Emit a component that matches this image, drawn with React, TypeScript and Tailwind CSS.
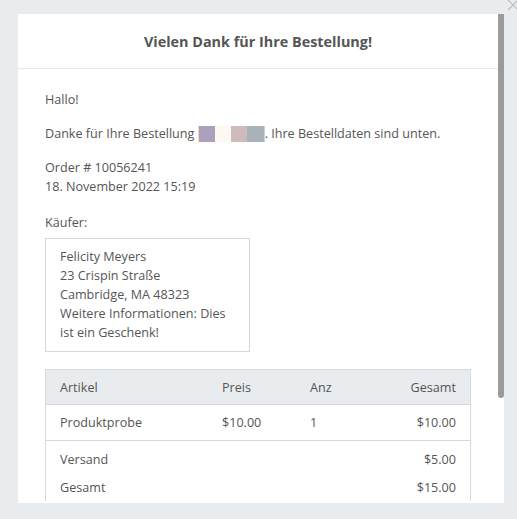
import React from "react";

const font = { fontFamily: '"Open Sans", "Noto Sans", Arial, sans-serif' };

function Blurred() {
  // pixelated redaction blocks
  return (
    <span className="inline-flex align-[-4px]">
      <span className="inline-block h-4 w-[1px] bg-[#f1d8bb]" />
      <span className="inline-block h-4 w-[16px] bg-[#ada0bd]" />
      <span className="inline-block h-4 w-[16px] bg-[#fdf8f3]" />
      <span className="inline-block h-4 w-[16px] bg-[#cdbcbb]" />
      <span className="inline-block h-4 w-[17px] bg-[#a9b2b8]" />
      <span className="inline-block h-4 w-[1px] bg-[#c9cfd6]" />
    </span>
  );
}

export default function App() {
  return (
    <div
      className="relative h-[519px] w-[517px] overflow-hidden bg-[#e9ecef] pl-[18px] pt-[14px] text-[12.6px] leading-[19px] text-[#555]"
      style={font}
    >
      {/* close button, mostly off-canvas */}
      <svg
        className="absolute left-[507px] top-[-1px]"
        width="12"
        height="12"
        viewBox="0 0 12 12"
        fill="none"
        stroke="#b7bbbf"
        strokeWidth="1.2"
      >
        <path d="M1 1l10 10M11 1L1 11" />
      </svg>

      <div className="flex h-[489px] w-[486px] bg-white">
        <div className="w-[480px] overflow-hidden">
          {/* Header */}
          <div className="flex h-[55px] items-center justify-center border-b border-[#e6e9ec]">
            <h2 className="text-[14.4px] font-bold text-[#555]">
              Vielen Dank für Ihre Bestellung!
            </h2>
          </div>

          {/* Body */}
          <div className="px-[27px] pt-[21px]">
            <p>Hallo!</p>
            <p className="mt-[15px]">
              Danke für Ihre Bestellung <Blurred />. Ihre Bestelldaten sind unten.
            </p>
            <p className="mt-[15px]">
              Order # 10056241
              <br />
              18. November 2022 15:19
            </p>
            <p className="mt-[17px]">Käufer:</p>

            <div className="mt-[6px] w-[205px] border border-[#d5d8db] pb-[9px] pl-[14px] pr-[10px] pt-[8px]">
              Felicity Meyers
              <br />
              23 Crispin Straße
              <br />
              Cambridge, MA 48323
              <br />
              Weitere Informationen: Dies ist ein Geschenk!
            </div>

            {/* Order table */}
            <div className="mt-[17px] w-[426px] border border-b-0 border-[#d5d9dd]">
              <div className="grid h-[35px] grid-cols-[162px_88px_1fr_auto] items-center border-b border-[#d3d7db] bg-[#e9ecef] px-[14px]">
                <span>Artikel</span>
                <span>Preis</span>
                <span>Anz</span>
                <span className="text-right">Gesamt</span>
              </div>
              <div className="grid h-[36px] grid-cols-[162px_88px_1fr_auto] items-center border-b border-[#d3d7db] px-[14px]">
                <span>Produktprobe</span>
                <span>$10.00</span>
                <span>1</span>
                <span className="text-right">$10.00</span>
              </div>
              <div className="px-[14px] pt-[4px]">
                <div className="flex h-[28px] items-center justify-between">
                  <span>Versand</span>
                  <span>$5.00</span>
                </div>
                <div className="flex h-[28px] items-center justify-between">
                  <span>Gesamt</span>
                  <span>$15.00</span>
                </div>
              </div>
            </div>
          </div>
        </div>

        {/* scrollbar */}
        <div className="w-[6px]">
          <div className="h-[384px] w-[6px] rounded-b-[3px] bg-[#9b9b9b]" />
        </div>
      </div>
    </div>
  );
}
